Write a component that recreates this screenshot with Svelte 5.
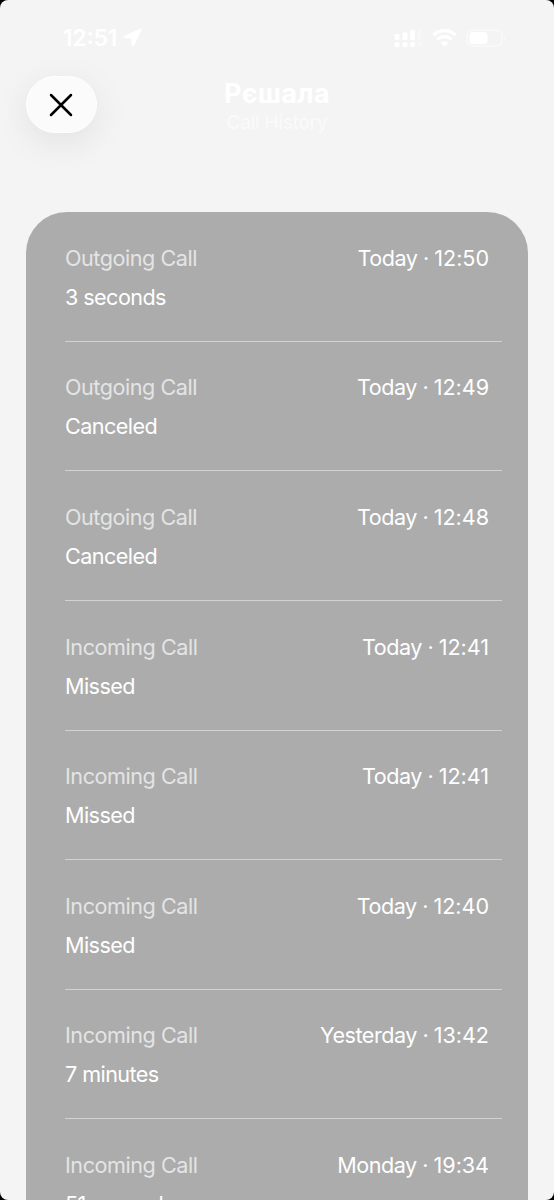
<script>
  const calls = [
    { type: 'Outgoing Call', detail: '3 seconds', day: 'Today', time: '12:50' },
    { type: 'Outgoing Call', detail: 'Canceled', day: 'Today', time: '12:49' },
    { type: 'Outgoing Call', detail: 'Canceled', day: 'Today', time: '12:48' },
    { type: 'Incoming Call', detail: 'Missed', day: 'Today', time: '12:41' },
    { type: 'Incoming Call', detail: 'Missed', day: 'Today', time: '12:41' },
    { type: 'Incoming Call', detail: 'Missed', day: 'Today', time: '12:40' },
    { type: 'Incoming Call', detail: '7 minutes', day: 'Yesterday', time: '13:42' },
    { type: 'Incoming Call', detail: '51 seconds', day: 'Monday', time: '19:34' }
  ]
</script>

<div class="device">
  <main class="screen">
    <div class="statusbar">
      <div class="clock">
        <span>12:51</span>
        <svg width="19" height="19" viewBox="0 0 19 19" aria-hidden="true">
          <path d="M17 1.4 1.2 8.4q-1.2.8.2 1.2l7.5.3.2 7.4q.5 1.5 1.4.2L18 2.2q.2-1.2-1-.8z" fill="currentColor" stroke="currentColor" stroke-width="1" stroke-linejoin="round" />
        </svg>
      </div>
      <div class="indicators">
        <svg class="signal" width="29" height="18" viewBox="0 0 29 18" aria-hidden="true">
          <g fill="currentColor">
            <rect x="0.5" y="5" width="5" height="6" rx="1.2" />
            <rect x="8.5" y="3.5" width="5" height="7.5" rx="1.2" />
            <rect x="16" y="1" width="5" height="10" rx="1.2" />
            <rect x="0.5" y="13" width="5" height="5" rx="1.8" />
            <rect x="8.5" y="13" width="5" height="5" rx="1.8" />
            <rect x="16" y="13" width="5" height="5" rx="1.8" />
            <g opacity="0.3">
              <rect x="23.5" y="0" width="4" height="11" rx="1.2" />
              <rect x="23.5" y="13" width="4" height="5" rx="1.8" />
            </g>
          </g>
        </svg>
        <svg class="wifi" width="25" height="18" viewBox="0 0 25 18" aria-hidden="true">
          <path d="M1.5 6.2a15.6 15.6 0 0 1 22 0M5.5 10.6a9.9 9.9 0 0 1 14 0" fill="none" stroke="currentColor" stroke-width="3.2" />
          <path d="M8.7 13.9a5.4 5.4 0 0 1 7.6 0l-3.8 3.8z" fill="currentColor" />
        </svg>
        <svg class="battery" width="40" height="18" viewBox="0 0 40 18" aria-hidden="true">
          <rect x="1" y="1" width="35" height="16" rx="5.5" fill="none" stroke="currentColor" stroke-width="1.4" opacity="0.5" />
          <rect x="3.5" y="3" width="18" height="12" rx="3.2" fill="currentColor" />
          <path d="M38 6.3q2 2.7 0 5.4z" fill="currentColor" opacity="0.5" />
        </svg>
      </div>
    </div>

    <header>
      <button class="close" aria-label="Close">
        <svg width="24" height="24" viewBox="0 0 24 24" aria-hidden="true">
          <path d="m2 2 20 20M22 2 2 22" stroke="#000" stroke-width="2.5" stroke-linecap="round" />
        </svg>
      </button>
      <div class="heading">
        <h1>Рєшала</h1>
        <p>Call History</p>
      </div>
    </header>

    <ul class="history">
      {#each calls as call}
        <li>
          <div class="line">
            <span class="type">{call.type}</span>
            <span class="when">{call.day} · <span class="time">{call.time}</span></span>
          </div>
          <div class="detail">{call.detail}</div>
        </li>
      {/each}
    </ul>
  </main>
</div>

<style>
  :global(body) {
    background: #000;
  }

  .device {
    height: 1200px;
    overflow: hidden;
    background: #000;
  }

  .screen {
    display: flex;
    flex-direction: column;
    box-sizing: border-box;
    height: 1200px;
    padding: 0 26px;
    overflow: hidden;
    border-radius: 8px;
    background: #f4f4f4;
    color: #fff;
    font-family: Inter, "Liberation Sans", sans-serif;
  }

  .statusbar {
    display: flex;
    flex: none;
    justify-content: space-between;
    align-items: center;
    height: 76px;
    padding: 0 22px 0 37px;
  }

  .clock {
    display: flex;
    align-items: center;
    gap: 6px;
    padding-bottom: 1px;
    font-size: 22.5px;
    font-weight: 600;
    letter-spacing: 0;
  }

  .indicators {
    display: flex;
    align-items: center;
    padding-bottom: 1px;
  }

  .wifi {
    margin: 0 9px 0 9px;
  }

  header {
    display: grid;
    grid-template-columns: 71px 1fr 71px;
    flex: none;
    height: 136px;
    align-items: start;
  }

  .close {
    display: flex;
    align-items: center;
    justify-content: center;
    width: 71px;
    height: 57px;
    padding: 0 2px 0 0;
    border: 1px solid #fff;
    border-radius: 29px;
    background: #fbfbfb;
    box-shadow: 0 9px 36px rgba(0, 0, 0, 0.08);
  }

  .heading {
    text-align: center;
  }

  h1 {
    margin: 1.5px 0 0;
    font-size: 27px;
    line-height: 32px;
    font-weight: 700;
    letter-spacing: 0.3px;
  }

  p {
    margin: 0;
    font-size: 19px;
    line-height: 25px;
    letter-spacing: -0.2px;
    opacity: 0.6;
  }

  .history {
    flex: none;
    margin: 0;
    padding: 0.2px 26px 0 39px;
    list-style: none;
    border-radius: 41px 41px 0 0;
    background: #acacac;
    font-size: 21.6px;
    line-height: 39px;
  }

  li {
    box-sizing: border-box;
    height: 129.6px;
    padding: 26.6px 13px 0 0;
    border-bottom: 1px solid #d2d2d2;
  }

  .line {
    display: flex;
    justify-content: space-between;
  }

  .type {
    color: #e4e4e4;
    letter-spacing: -0.46px;
  }

  .when {
    letter-spacing: -0.5px;
  }

  .time {
    letter-spacing: -0.05px;
  }

  .detail {
    letter-spacing: -0.57px;
  }
</style>
